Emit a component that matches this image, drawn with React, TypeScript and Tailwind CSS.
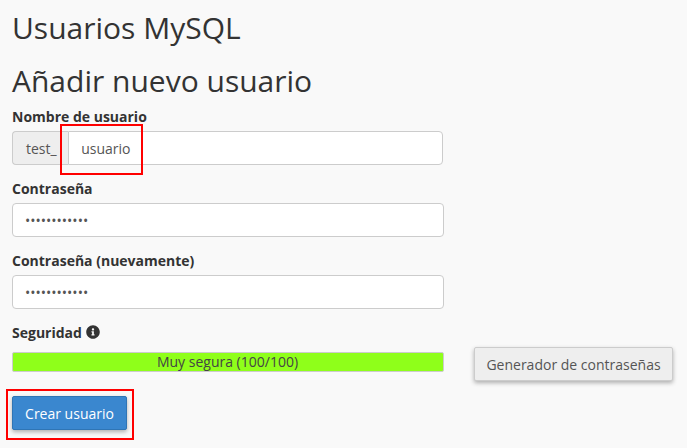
const redBox = "absolute border-2 border-[#ff0000] pointer-events-none";

const Field = ({ label, value }: { label: string; value: string }) => (
  <div className="mb-[14px]">
    <label className="block mb-[4px] text-[14px] leading-[20px] font-bold text-[#333]">{label}</label>
    <input
      type="password"
      readOnly
      value={value}
      className="block w-[432px] h-[34px] px-3 bg-white border border-[#ccc] rounded text-[14px] text-[#555] outline-none"
    />
  </div>
);

export default function App() {
  return (
    <main
      className="relative w-[687px] h-[448px] overflow-hidden bg-[#f9f9f9] pl-3 pt-2 text-[#333]"
      style={{ fontFamily: '"Open Sans", sans-serif' }}
    >
      <h1 className="text-[30px] leading-[40px] text-[#333] m-0">Usuarios MySQL</h1>
      <h2 className="mt-[13px] text-[30px] leading-[40px] text-[#333]">Añadir nuevo usuario</h2>

      <div className="mt-[6px] mb-[14px]">
        <label className="block mb-[4px] text-[14px] leading-[20px] font-bold">Nombre de usuario</label>
        <div className="flex w-[431px] h-[34px]">
          <span className="flex items-center pl-[13px] pr-[11px] bg-[#eee] border border-[#ccc] border-r-0 rounded-l text-[14px] text-[#555]">
            test_
          </span>
          <input
            readOnly
            value="usuario"
            className="flex-1 min-w-0 pl-[12.5px] pr-3 bg-white border border-[#ccc] rounded-r text-[14px] text-[#555] outline-none"
          />
        </div>
      </div>

      <Field label="Contraseña" value="aaaaaaaaaaaa" />
      <Field label="Contraseña (nuevamente)" value="aaaaaaaaaaaa" />

      <div className="flex items-start -mt-px">
        <div className="w-[432px]">
          <div className="flex items-center gap-1 h-5 text-[14px] font-bold">
            Seguridad
            <svg viewBox="0 0 512 512" className="w-[14px] h-[14px] fill-[#333]">
              <path d="M256 8C119 8 8 119 8 256s111 248 248 248 248-111 248-248S393 8 256 8zm0 110c23 0 42 19 42 42s-19 42-42 42-42-19-42-42 19-42 42-42zm56 254c0 7-5 12-12 12h-88c-7 0-12-5-12-12v-24c0-7 5-12 12-12h12v-64h-12c-7 0-12-5-12-12v-24c0-7 5-12 12-12h64c7 0 12 5 12 12v100h12c7 0 12 5 12 12v24z" />
            </svg>
          </div>
          <div className="mt-[10px] h-5 pr-px bg-[#8fff1a] border border-[#ccc] rounded-[2px] flex items-center justify-center text-[14px] leading-none text-[#444]">
            Muy segura (100/100)
          </div>
        </div>
        <button className="ml-[30px] mt-[25px] w-[199px] h-[34px] bg-[#eee] border border-[#ccc] rounded-[2px] text-[14px] text-[#555] shadow-[0_2px_4px_rgba(0,0,0,0.3)]">
          Generador de contraseñas
        </button>
      </div>

      <button className="mt-[15px] block w-[115px] h-[34px] bg-[#3a87cf] border border-[#2f75b5] rounded-[2px] text-[14px] text-white shadow-[0_2px_4px_rgba(0,0,0,0.3)]">
        Crear usuario
      </button>

      <div className={`${redBox} left-[60px] top-[124px] w-[83px] h-[51px]`} />
      <div className={`${redBox} left-[6px] top-[389px] w-[128px] h-[51px]`} />
    </main>
  );
}
